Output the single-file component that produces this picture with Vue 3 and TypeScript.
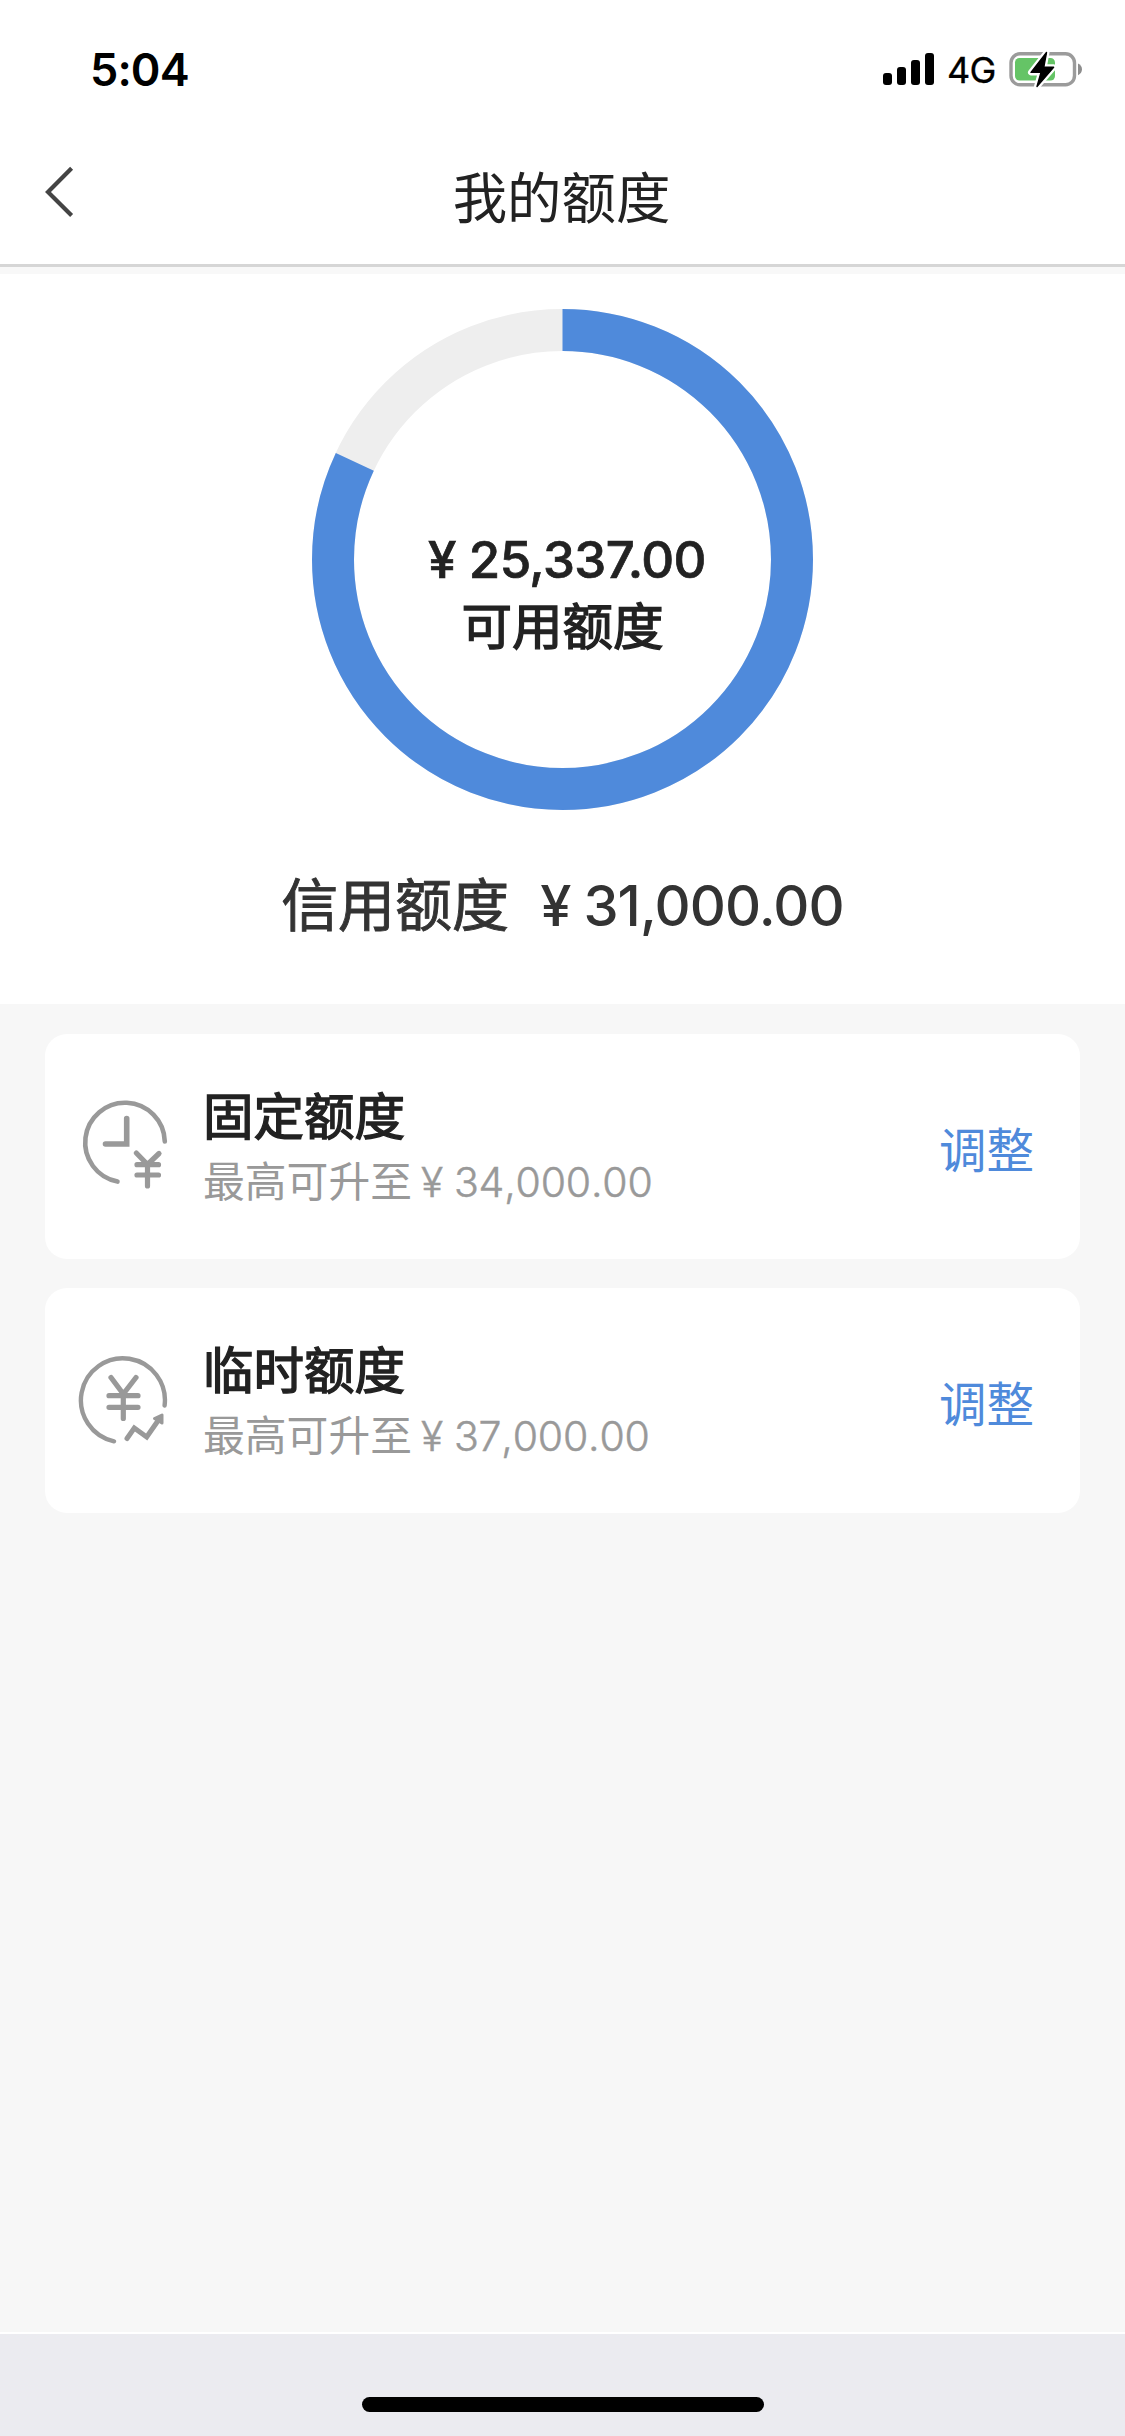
<script setup lang="ts">
interface Quota {
  id: 'fixed' | 'temporary'
  title: string
  hint: string
  amount: string
}

const quotas: Quota[] = [
  { id: 'fixed', title: '固定额度', hint: '最高可升至', amount: '34,000.00' },
  { id: 'temporary', title: '临时额度', hint: '最高可升至', amount: '37,000.00' },
]

const available = '25,337.00'
const total = '31,000.00'
const ratio = 82
</script>

<template>
  <div class="screen">
    <header>
      <div class="status">
        <span class="time">5:04</span>
        <div class="indicators">
          <svg class="signal" width="52" height="34" viewBox="0 0 52 34">
            <rect x="0" y="21" width="9" height="12" rx="3" />
            <rect x="14" y="15" width="9" height="18" rx="3" />
            <rect x="28" y="8" width="9" height="25" rx="3" />
            <rect x="42" y="1" width="9" height="32" rx="3" />
          </svg>
          <span class="network">4G</span>
          <svg class="battery" width="76" height="40" viewBox="0 0 76 40">
            <rect x="2" y="4.8" width="63.5" height="31" rx="9" fill="none" stroke="#9b9b9b" stroke-width="3.4" />
            <rect x="6" y="9" width="40" height="22.5" rx="4.5" fill="#65c466" />
            <path d="M69 14.5 Q73 16.5 73 20.3 Q73 24.2 69 26.2 Z" fill="#8d8d8d" />
            <path
              d="M37.5 3.5 L22 23.4 L32 23.4 L28 37.5 L44.6 18.2 L34.8 18.2 Z"
              fill="#000" stroke="#fff" stroke-width="6" stroke-linejoin="round" paint-order="stroke"
            />
            <path
              d="M37.5 3.5 L22 23.4 L32 23.4 L28 37.5 L44.6 18.2 L34.8 18.2 Z"
              fill="#000" stroke="#000" stroke-width="1.4" stroke-linejoin="round"
            />
          </svg>
        </div>
      </div>
      <nav class="navbar">
        <svg class="back" width="30" height="52" viewBox="0 0 30 52">
          <path d="M27.6 2.3 L4 26 L27.6 49.5" fill="none" stroke="#444" stroke-width="4.2" />
        </svg>
        <h1>我的额度</h1>
      </nav>
    </header>

    <section class="summary">
      <div class="gauge">
        <svg class="ring" width="501" height="501" viewBox="0 0 501 501">
          <circle cx="250.5" cy="250.5" r="229.5" fill="none" stroke="#eee" stroke-width="42" />
          <circle
            cx="250.5" cy="250.5" r="229.5" fill="none" stroke="#4f8adb" stroke-width="42"
            pathLength="100" :stroke-dasharray="`${ratio} 100`" transform="rotate(-90 250.5 250.5)"
          />
        </svg>
        <div class="gauge-text">
          <div class="available"><span class="yen">¥</span>{{ available }}</div>
          <div class="label">可用额度</div>
        </div>
      </div>
      <div class="total">
        <span class="total-label">信用额度</span>
        <span class="total-amount"><span class="yen">¥</span>{{ total }}</span>
      </div>
    </section>

    <main>
      <article v-for="quota in quotas" :key="quota.id" class="card">
        <svg v-if="quota.id === 'fixed'" class="icon" width="92" height="96" viewBox="0 0 92 96">
          <g fill="none" stroke="#999" stroke-linecap="round" stroke-linejoin="round">
            <path d="M86.8 43.5 A39.8 39.8 0 1 0 39.5 83.6" stroke-width="4.6" />
            <path d="M48.7 20.5 V46 H27.5" stroke-width="5.6" stroke-linejoin="miter" />
            <path d="M58.3 55 L69.5 66.5 L81 55.5 M59 66.7 H80.5 M59 77 H80.5 M69.5 66.5 V88" stroke-width="5.2" />
          </g>
        </svg>
        <svg v-else class="icon" width="92" height="96" viewBox="0 0 92 96">
          <g fill="none" stroke="#999" stroke-linecap="round" stroke-linejoin="round">
            <path d="M86.6 53.5 A42 42 0 1 0 36 89.3" stroke-width="4.4" />
            <path d="M33 25.5 L45.3 42 L58 25.5 M31 43.7 H60 M31 55.3 H60 M45.3 42 V66.5" stroke-width="5.2" />
            <path d="M49 86.5 L56.3 76 L68.7 85 L80.5 68" stroke-width="5" stroke-linejoin="miter" />
            <path d="M76.5 66.5 L84 63 L84 71 Z" fill="#999" stroke-width="3" />
          </g>
        </svg>
        <div class="card-text">
          <h2>{{ quota.title }}</h2>
          <p>{{ quota.hint }}<span class="amount"><span class="yen">¥</span>{{ quota.amount }}</span></p>
        </div>
        <a class="adjust">调整</a>
      </article>
    </main>

    <footer><div class="home-bar"></div></footer>
  </div>
</template>

<style>
html,
body {
  margin: 0;
  background: #f7f7f7;
}
</style>

<style scoped>
.screen {
  display: flex;
  flex-direction: column;
  width: 1125px;
  height: 2436px;
  overflow: hidden;
  background: #f7f7f7;
  color: #222;
  font-family: Inter, 'Noto Sans CJK SC', sans-serif;
}

h1,
h2,
p {
  margin: 0;
}

header {
  box-sizing: border-box;
  height: 267px;
  flex: none;
  background: #fff;
  border-bottom: 3px solid #d6d6d6;
}

.status {
  display: flex;
  justify-content: space-between;
  height: 132px;
  padding: 0 40px 0 90px;
}

.time {
  margin-top: 40px;
  line-height: 60px;
  font-size: 45px;
  font-weight: 600;
  letter-spacing: -0.9px;
  color: #000;
}

.indicators {
  display: flex;
  align-items: flex-start;
}

.signal {
  margin-top: 52px;
}

.network {
  width: 62px;
  margin: 45px 0 0 12px;
  line-height: 50px;
  font-size: 36px;
  font-weight: 400;
  letter-spacing: -0.8px;
  color: #000;
  -webkit-text-stroke: 0.3px currentColor;
}

.battery {
  margin-top: 49px;
}

.navbar {
  display: grid;
  grid-template-columns: 30px 1fr 30px;
  height: 132px;
  padding: 0 46px 0 44px;
}

.back {
  margin-top: 34px;
}

h1 {
  margin-top: 26px;
  line-height: 80px;
  text-align: center;
  font-size: 54.4px;
  font-weight: 400;
}

.summary {
  display: flex;
  flex-direction: column;
  align-items: center;
  box-sizing: border-box;
  height: 737px;
  flex: none;
  padding-top: 35px;
  background: #fff;
  border-top: 7px solid #f8f8f8;
}

.gauge {
  display: grid;
  width: 501px;
  height: 501px;
}

.ring,
.gauge-text {
  grid-area: 1 / 1;
}

.gauge-text {
  padding-top: 216px;
  text-align: center;
}

.available {
  padding-left: 9px;
  line-height: 70px;
  font-size: 51px;
  font-weight: 500;
  letter-spacing: -0.6px;
  -webkit-text-stroke: 0.7px currentColor;
}

.yen {
  margin-right: 13px;
}

.label {
  line-height: 64px;
  font-size: 50.5px;
  font-weight: 400;
  -webkit-text-stroke: 1.4px currentColor;
}

.total {
  display: flex;
  margin-top: 56px;
  line-height: 80px;
  color: #333;
  font-size: 56px;
  font-weight: 500;
}

.total-label {
  margin-right: 31px;
  font-size: 57px;
  font-weight: 400;
  -webkit-text-stroke: 0.9px currentColor;
}

.total-amount {
  letter-spacing: -0.9px;
}

main {
  display: flex;
  flex: 1;
  flex-direction: column;
  gap: 29px;
  padding: 30px 45px 0;
  border-bottom: 2px solid #fff;
}

.card {
  display: flex;
  box-sizing: border-box;
  height: 225px;
  padding: 0 46px 0 33px;
  background: #fff;
  border-radius: 22px;
}

.icon {
  margin-top: 64px;
}

.card-text {
  flex: 1;
  margin: 49px 0 0 33px;
}

h2 {
  line-height: 68px;
  font-size: 50.5px;
  font-weight: 400;
  -webkit-text-stroke: 1.4px currentColor;
}

p {
  line-height: 62px;
  color: #999;
  font-size: 41.8px;
  font-weight: 400;
}

.amount {
  margin-left: 9px;
  font-size: 41px;
  font-weight: 300;
  font-kerning: none;
  letter-spacing: -0.2px;
  -webkit-text-stroke: 0.5px currentColor;
}

.amount .yen {
  margin-right: 11px;
}

.adjust {
  margin-top: 84px;
  line-height: 66px;
  color: #4f8adb;
  font-size: 47.5px;
}

footer {
  display: flex;
  justify-content: center;
  box-sizing: border-box;
  height: 102px;
  flex: none;
  padding-top: 63px;
  background: #ebebf0;
}

.home-bar {
  width: 402px;
  height: 15px;
  border-radius: 8px;
  background: #000;
}
</style>
